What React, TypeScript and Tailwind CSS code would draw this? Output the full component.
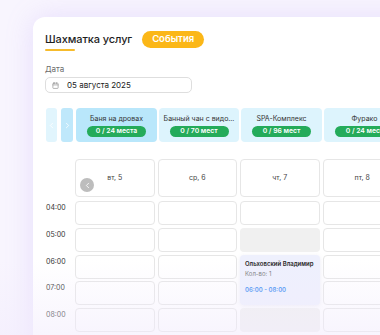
import { Calendar, ChevronLeft, ChevronRight } from "lucide-react";

const services = [
  { name: "Баня на дровах", seats: "0 / 24 места", active: true, w: "w-[81px]" },
  { name: "Банный чан с видо...", seats: "0 / 70 мест", active: false, w: "w-[80px]" },
  { name: "SPA-Комплекс", seats: "0 / 96 мест", active: false, w: "w-[81px]" },
  { name: "Фурако", seats: "0 / 24 мест", active: false, w: "w-[81px]" },
];

const days = ["вт, 5", "ср, 6", "чт, 7", "пт, 8"];
const hours = ["04:00", "05:00", "06:00", "07:00", "08:00"];

function Cell({ gray }: { gray?: boolean }) {
  if (gray) return <div className="h-[24px] rounded-[4px] bg-[#f0f0f0]" />;
  return <div className="h-[24px] rounded-[4px] border border-[#e6e6e6] bg-white" />;
}

export default function App() {
  return (
    <div
      className="relative w-[380px] h-[335px] overflow-hidden bg-[#f8f5fe]"
      style={{ fontFamily: "Inter, 'Noto Sans', sans-serif" }}
    >
      <div className="ml-[33px] mt-[17px] h-[400px] w-[420px] rounded-tl-[12px] bg-white pl-[12px] pt-[14px] shadow-[0_0_28px_rgba(175,140,245,0.22)]">
        {/* header */}
        <div className="flex items-start gap-[10px]">
          <div className="flex flex-col">
            <h1 className="text-[11px] leading-[17px] font-medium text-[#1e1e1e] tracking-[-0.1px]">
              Шахматка услуг
            </h1>
            <div className="mt-[1px] h-[2px] w-[30px] rounded-full bg-[#f6bb2c]" />
          </div>
          <span className="flex h-[17px] items-center rounded-full bg-[#fbb718] px-[10px] text-[9.5px] font-semibold text-white">
            События
          </span>
        </div>

        {/* date */}
        <div className="mt-[13px] text-[8px] leading-[11px] text-[#6b6b6b]">Дата</div>
        <div className="mt-[2px] flex h-[16px] w-[147px] items-center gap-[8px] rounded-[5px] border border-[#dedede] pl-[6px]">
          <Calendar size={7} className="text-[#9a9a9a]" strokeWidth={2.5} />
          <span className="text-[8px] text-[#222]">05 августа 2025</span>
        </div>

        {/* services */}
        <div className="mt-[15px] flex h-[34px] pl-[1px]">
          <button className="flex w-[11px] items-center justify-center rounded-[3px] bg-[#e1f5fd]">
            <ChevronLeft size={9} className="text-white" strokeWidth={2} />
          </button>
          <button className="ml-[4px] flex w-[12px] items-center justify-center rounded-[3px] bg-[#bfe8fb]">
            <ChevronRight size={9} className="text-white" strokeWidth={2} />
          </button>
          <div className="ml-[3px] flex gap-[2px]">
            {services.map((s) => (
              <div
                key={s.name}
                className={`${s.w} flex shrink-0 flex-col items-center rounded-[4px] pt-[6px] ${
                  s.active ? "bg-[#b9e7fb]" : "bg-[#ddf4fd]"
                }`}
              >
                <span className="whitespace-nowrap text-[7px] leading-[9px] text-[#333]">{s.name}</span>
                <span className="mt-[3px] flex h-[11px] w-[59px] items-center justify-center rounded-full bg-[#24ab5a] text-[6.8px] font-semibold text-white">
                  {s.seats}
                </span>
              </div>
            ))}
          </div>
        </div>

        {/* schedule */}
        <div className="mt-[17px] grid grid-cols-[27px_repeat(4,79.5px)] gap-x-[3px] gap-y-[2.75px]">
          <div />
          {days.map((d, i) => (
            <div
              key={d}
              className="relative mb-[1.25px] flex h-[38px] items-center justify-center rounded-[4px] border border-[#e6e6e6] text-[7px] text-[#444]"
            >
              {d}
              {i === 0 && (
                <span className="absolute left-[4px] top-[18px] flex h-[14px] w-[14px] items-center justify-center rounded-full bg-[#bdbdbd]">
                  <ChevronLeft size={9} className="text-white" strokeWidth={2.2} />
                </span>
              )}
            </div>
          ))}

          {hours.map((h, r) => (
            <Row key={h} hour={h} r={r} />
          ))}
        </div>
      </div>

      {/* bottom fade */}
      <div className="pointer-events-none absolute inset-x-0 bottom-0 h-[75px] bg-linear-to-b from-transparent to-[#f2ecfd]/55" />
    </div>
  );
}

function Row({ hour, r }: { hour: string; r: number }) {
  return (
    <>
      <div className="pt-[2px] pl-[1px] text-[7px] leading-[9px] text-[#333]">{hour}</div>
      <Cell />
      <Cell />
      {r === 1 && <Cell gray />}
      {r === 2 && (
        <div className="row-span-2 rounded-[4px] bg-[#eef0fd] px-[5px] pt-[5px] shadow-[0_1px_4px_rgba(120,120,180,0.15)]">
          <div className="whitespace-nowrap text-[6px] leading-[8px] font-semibold text-[#222]">Ольховский Владимир</div>
          <div className="mt-[2px] text-[6px] leading-[8px] text-[#777]">Кол-во: 1</div>
          <div className="mt-[8px] text-[6px] leading-[8px] font-semibold text-[#3b8bf2]">06:00 - 08:00</div>
        </div>
      )}
      {r === 4 && <Cell gray />}
      {r === 0 && <Cell />}
      <Cell />
    </>
  );
}
